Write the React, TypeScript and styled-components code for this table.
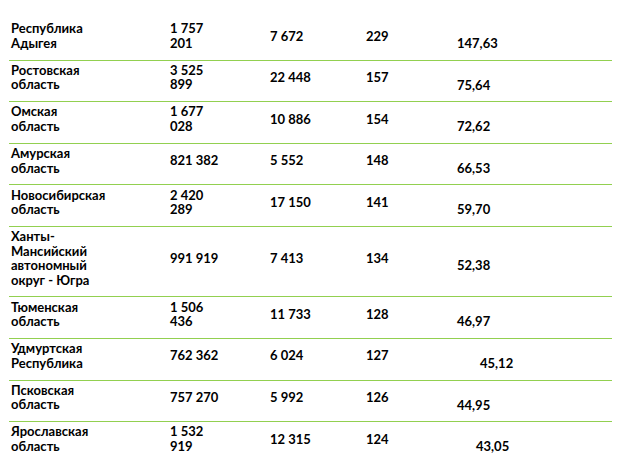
import styled, { createGlobalStyle } from "styled-components";

const GlobalStyle = createGlobalStyle`
  body {
    margin: 0;
    background: #fff;
  }
`;

const Page = styled.div`
  padding: 19px 0 0 9px;
`;

const Table = styled.table`
  border-collapse: collapse;
  width: 603px;
  table-layout: fixed;
  font-family: Lato, "Open Sans", sans-serif;
  font-weight: 700;
  font-size: 13px;
  line-height: 14.6px;
  color: #000;
`;

const Row = styled.tr`
  & + & {
    border-top: 1px solid #92d050;
  }
`;

const Cell = styled.td<{ $width: number; $drop?: boolean; $indent?: number }>`
  box-sizing: border-box;
  width: ${({ $width }) => $width}px;
  padding: ${({ $drop }) => ($drop ? "17px" : "2px")} 0 9px
    ${({ $indent }) => 2 + ($indent ?? 0)}px;
  vertical-align: middle;
  white-space: pre-line;
`;

type Region = {
  name: string;
  population: string;
  count: string;
  rank: string;
  value: string;
  indent?: number;
};

const regions: Region[] = [
  { name: "Республика\nАдыгея", population: "1 757\n201", count: "7 672", rank: "229", value: "147,63" },
  { name: "Ростовская\nобласть", population: "3 525\n899", count: "22 448", rank: "157", value: "75,64" },
  { name: "Омская\nобласть", population: "1 677\n028", count: "10 886", rank: "154", value: "72,62" },
  { name: "Амурская\nобласть", population: "821 382", count: "5 552", rank: "148", value: "66,53" },
  { name: "Новосибирская\nобласть", population: "2 420\n289", count: "17 150", rank: "141", value: "59,70" },
  { name: "Ханты-\nМансийский\nавтономный\nокруг - Югра", population: "991 919", count: "7 413", rank: "134", value: "52,38" },
  { name: "Тюменская\nобласть", population: "1 506\n436", count: "11 733", rank: "128", value: "46,97" },
  { name: "Удмуртская\nРеспублика", population: "762 362", count: "6 024", rank: "127", value: "45,12", indent: 23 },
  { name: "Псковская\nобласть", population: "757 270", count: "5 992", rank: "126", value: "44,95" },
  { name: "Ярославская\nобласть", population: "1 532\n919", count: "12 315", rank: "124", value: "43,05", indent: 19 },
];

export default function App() {
  return (
    <>
      <GlobalStyle />
      <Page>
        <Table>
          <tbody>
            {regions.map((r) => (
              <Row key={r.name}>
                <Cell $width={159}>{r.name}</Cell>
                <Cell $width={100}>{r.population}</Cell>
                <Cell $width={96}>{r.count}</Cell>
                <Cell $width={91}>{r.rank}</Cell>
                <Cell $width={157} $drop $indent={r.indent}>
                  {r.value}
                </Cell>
              </Row>
            ))}
          </tbody>
        </Table>
      </Page>
    </>
  );
}
